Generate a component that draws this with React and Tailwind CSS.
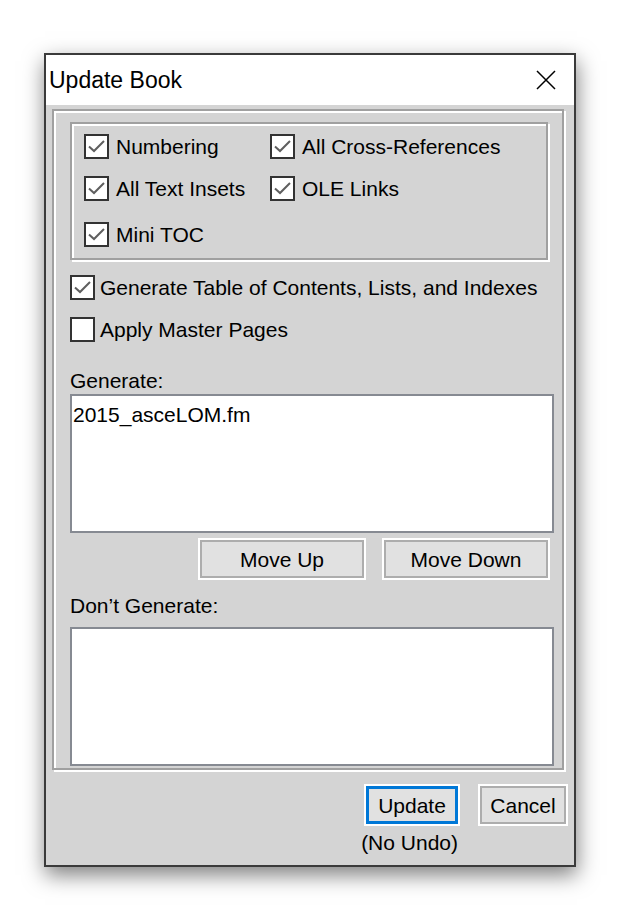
import React from 'react';

const FONT = "font-['Liberation_Sans',Arial,sans-serif]";

function Check({ checked }) {
  return (
    <span className="w-[25px] h-[25px] shrink-0 border-2 border-[#333] bg-white flex items-center justify-center">
      {checked && (
        <svg width="21" height="21" viewBox="0 0 21 21" fill="none">
          <path d="M3 10.5 L8 15 L18 5" stroke="#5f5f5f" strokeWidth="2" />
        </svg>
      )}
    </span>
  );
}

function Option({ label, checked = true, gap = 'gap-[7px]' }) {
  return (
    <label className={`flex items-center h-[25px] ${gap} leading-[25px] whitespace-nowrap`}>
      <Check checked={checked} />
      <span>{label}</span>
    </label>
  );
}

function ListBox({ items = [] }) {
  return (
    <div className="w-[484px] h-[139px] border-2 border-[#868a92] bg-white pt-[6px] pl-[1px]">
      {items.map((it) => (
        <div key={it} className="leading-[25px]">{it}</div>
      ))}
    </div>
  );
}

function Button({ children, className = '' }) {
  return (
    <button className={`h-[38px] border-2 border-[#adadad] bg-[#e1e1e1] shadow-[0_0_0_2px_#fff] leading-none text-black ${className}`}>
      {children}
    </button>
  );
}

const etched = 'border-2 border-[#a0a0a0] shadow-[inset_2px_2px_0_#fff,2px_2px_0_#fff]';

export default function App() {
  return (
    <div className={`min-h-screen w-[620px] bg-white pt-[53px] pl-[44px] text-black text-[21px] ${FONT}`}>
      <div className="w-[532px] h-[814px] border-2 border-[#3a3a3a] flex flex-col shadow-[1px_8px_20px_rgba(0,0,0,0.5)]">
        {/* title bar */}
        <div className="h-[50px] bg-white flex items-center justify-between pl-[3px] pr-[18px]">
          <span className="text-[23px] leading-none">Update Book</span>
          <svg width="20" height="20" viewBox="0 0 20 20" fill="none">
            <path d="M1 1 L19 19 M19 1 L1 19" stroke="#000" strokeWidth="1.5" />
          </svg>
        </div>

        {/* body */}
        <div className="flex-1 bg-[#d4d4d4] pt-[4px] pl-[6px] flex flex-col">
          <div className={`w-[512px] h-[661px] ${etched} pt-[11px] pl-[16px] flex flex-col`}>
            <div className={`w-[478px] h-[138px] ${etched} pt-[10px] pl-[12px] flex flex-col`}>
              <div className="flex">
                <div className="w-[186px]"><Option label="Numbering" /></div>
                <Option label="All Cross-References" />
              </div>
              <div className="flex mt-[17px]">
                <div className="w-[186px]"><Option label="All Text Insets" /></div>
                <Option label="OLE Links" />
              </div>
              <div className="flex mt-[21px]">
                <Option label="Mini TOC" />
              </div>
            </div>

            <div className="mt-[15px]">
              <Option label="Generate Table of Contents, Lists, and Indexes" gap="gap-[5px]" />
            </div>
            <div className="mt-[17px]">
              <Option label="Apply Master Pages" checked={false} gap="gap-[5px]" />
            </div>

            <div className="mt-[26px] leading-[25px] h-[25px]">Generate:</div>
            <div className="mt-[1px]">
              <ListBox items={['2015_asceLOM.fm']} />
            </div>

            <div className="mt-[7px] w-[484px] flex justify-end gap-[20px] pr-[6px]">
              <Button className="w-[164px]">Move Up</Button>
              <Button className="w-[164px]">Move Down</Button>
            </div>

            <div className="mt-[15px] leading-[25px] h-[25px]">Don’t Generate:</div>
            <div className="mt-[9px]">
              <ListBox />
            </div>
          </div>

          {/* footer */}
          <div className="mt-[16px] flex justify-end items-start gap-[22px] pr-[8px]">
            <div className="flex flex-col items-end">
              <button className="w-[92px] h-[38px] border-[3px] border-[#0078d7] bg-[#e1e1e1] shadow-[0_0_0_2px_#fff] leading-none text-black">
                Update
              </button>
              <div className="mt-[6px] leading-[25px]">(No Undo)</div>
            </div>
            <Button className="w-[86px]">Cancel</Button>
          </div>
        </div>
      </div>
    </div>
  );
}
